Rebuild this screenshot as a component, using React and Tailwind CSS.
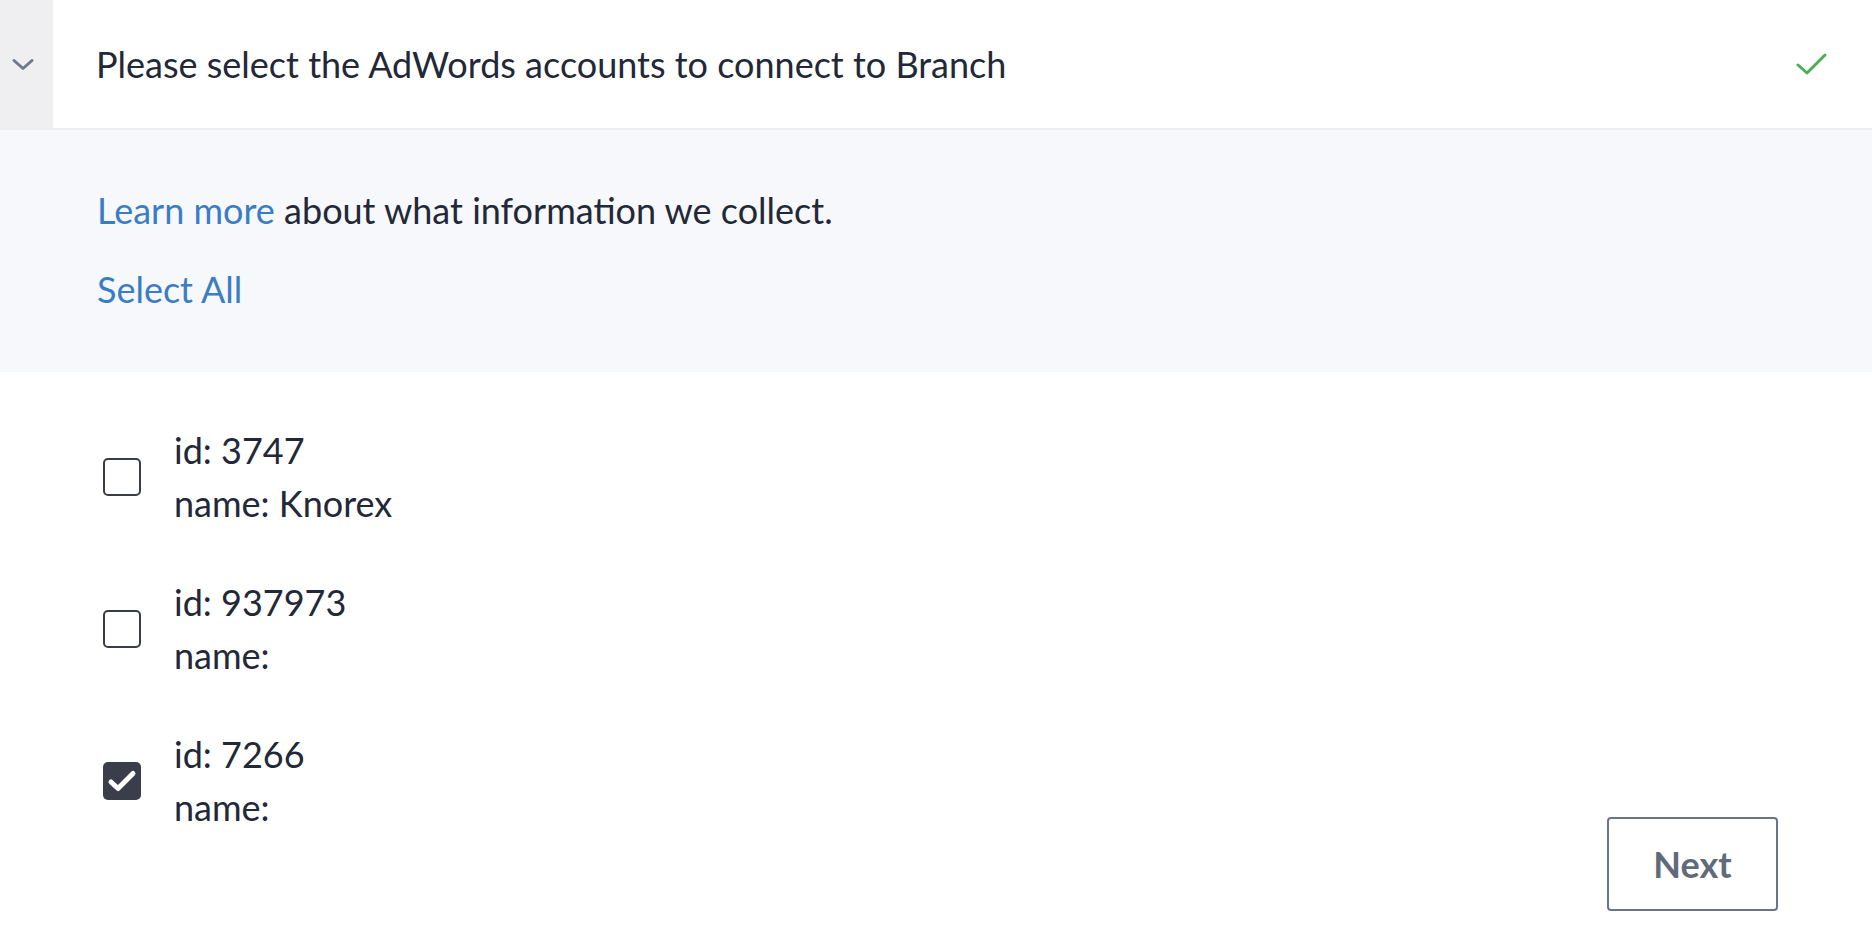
import React, { useState } from "react";

const accounts = [
  { id: "3747", name: "Knorex" },
  { id: "937973", name: "" },
  { id: "7266", name: "" },
];

const Checkbox = ({ checked, onChange }) => (
  <button
    type="button"
    onClick={onChange}
    className={
      checked
        ? "flex h-[38px] w-[38px] shrink-0 items-center justify-center rounded-[5px] bg-[#3a3d4a]"
        : "flex h-[38px] w-[38px] shrink-0 items-center justify-center rounded-[5px] border-2 border-[#3a3d47] bg-white"
    }
  >
    {checked && (
      <svg width="30" height="24" viewBox="0 0 30 24" fill="none">
        <path d="M4 13 L11 19.5 L26 4.5" stroke="white" strokeWidth="5" strokeLinecap="round" strokeLinejoin="round" />
      </svg>
    )}
  </button>
);

const App = () => {
  const [selected, setSelected] = useState(["7266"]);

  const toggle = (id) => {
    setSelected((prev) => (prev.includes(id) ? prev.filter((x) => x !== id) : [...prev, id]));
  };

  return (
    <div className="min-h-[950px] w-full bg-white text-[#232838]" style={{ fontFamily: "Lato, 'Open Sans', sans-serif" }}>
      {/* header */}
      <div className="flex h-[130px] border-b-2 border-[#eceef2]">
        <div className="flex w-[53px] shrink-0 items-center justify-center bg-[#efeff1] pr-[7px]">
          <svg width="24" height="15" viewBox="0 0 24 15" fill="none">
            <path d="M3 3.5 L12 11.5 L21 3.5" stroke="#6f7789" strokeWidth="3" strokeLinecap="round" strokeLinejoin="round" />
          </svg>
        </div>
        <div className="flex flex-1 items-center justify-between pl-[43px] pr-[42px]">
          <span className="text-[36px]">Please select the AdWords accounts to connect to Branch</span>
          <svg width="36" height="28" viewBox="0 0 36 28" fill="none">
            <path d="M4 15 L13 23 L31 5" stroke="#4caf50" strokeWidth="3" strokeLinecap="round" strokeLinejoin="round" />
          </svg>
        </div>
      </div>

      {/* info */}
      <div className="bg-[#f7f8fb] pl-[97px] pt-[56px] pb-[59px] text-[36px]">
        <p className="leading-[48px]">
          <a href="#" className="text-[#3b7dc4]">Learn more</a> about what information we collect.
        </p>
        <p className="mt-[31px] leading-[48px]">
          <a href="#" className="text-[#3b7dc4]">Select All</a>
        </p>
      </div>

      {/* accounts */}
      <div className="flex items-end justify-between pl-[103px] pr-[94px] pt-[52px]">
        <div className="flex flex-col gap-[46px] pb-[77px]">
          {accounts.map((acc) => (
            <div key={acc.id} className="flex items-center gap-[33px]">
              <Checkbox checked={selected.includes(acc.id)} onChange={() => toggle(acc.id)} />
              <div className="text-[36px] leading-[53px]">
                <div>id: {acc.id}</div>
                <div>name:{acc.name ? ` ${acc.name}` : ""}</div>
              </div>
            </div>
          ))}
        </div>
        <button
          type="button"
          className="h-[94px] w-[171px] rounded-[4px] border-2 border-[#6b7484] text-[36px] font-bold text-[#5f6b7a]"
        >
          Next
        </button>
      </div>
    </div>
  );
};

export default App;
